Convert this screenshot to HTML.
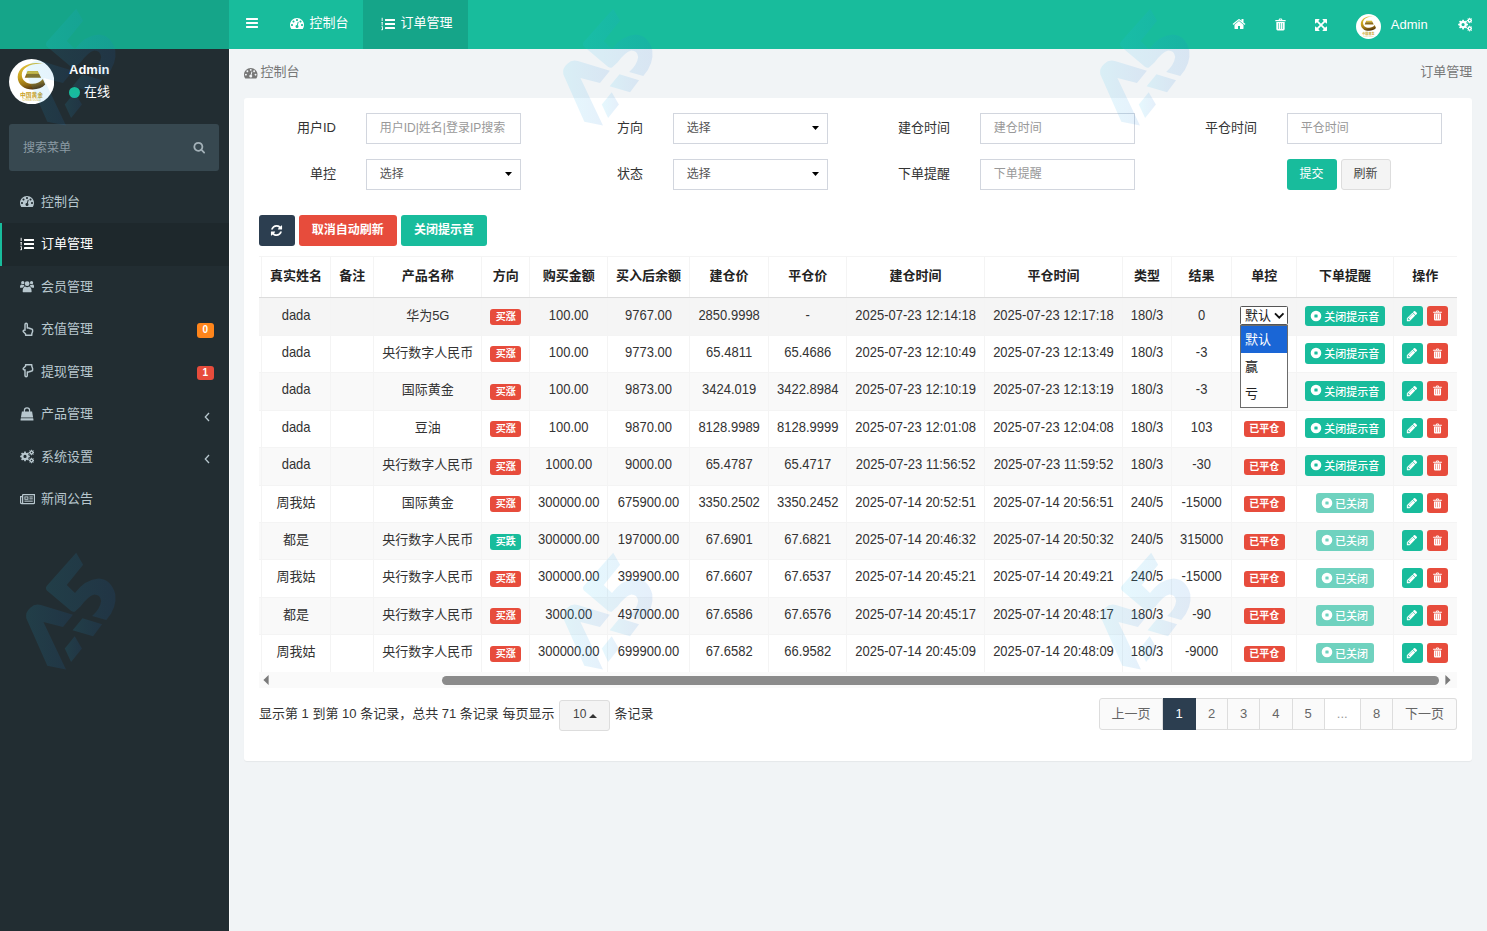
<!DOCTYPE html><html lang="zh-CN"><head><meta charset="utf-8"><title>订单管理</title><style>
*{box-sizing:border-box;margin:0;padding:0}
html,body{width:1487px;height:931px;overflow:hidden}
body{font-family:"Liberation Sans","Noto Sans CJK SC",sans-serif;font-size:13px;color:#333;background:#f1f4f6;position:relative}
.ic{display:block;position:absolute}
.abs{position:absolute}
.t{position:absolute;white-space:nowrap;line-height:20px;height:20px}
/* header */
#logo{left:0;top:0;width:229px;height:49px;background:#15a589}
#nav{left:229px;top:0;width:1258px;height:49px;background:#18bc9c}
#tabact{left:363px;top:0;width:105px;height:49px;background:#15a589}
.nt{color:#fff;font-size:13px}
/* sidebar */
#side{left:0;top:49px;width:229px;height:882px;background:#222d32}
#sideln{left:229px;top:49px;width:1px;height:882px;background:#fbfcfd}
#search{left:9px;top:124px;width:210px;height:47px;background:#374850;border-radius:3px}
.mi{color:#b8c7ce;font-size:13px}
#miact{left:0;top:223px;width:229px;height:43px;background:#1e282c;border-left:2px solid #18bc9c}
.bdg{position:absolute;color:#fff;font-weight:700;font-size:10px;line-height:14.5px;height:14.5px;width:17px;text-align:center;border-radius:3px}
/* content */
#card{left:244px;top:98px;width:1228px;height:663px;background:#fff;border-radius:3px;box-shadow:0 1px 1px rgba(0,0,0,.05)}
.lbl{position:absolute;font-size:13px;color:#333;text-align:right;width:100px;line-height:20px;height:20px;white-space:nowrap}
.inp{position:absolute;width:155px;height:31px;border:1px solid #d2d6de;background:#fff;font-size:12px;line-height:29px;padding-left:13px;color:#999;white-space:nowrap}
.sel{color:#555}

.btn{position:absolute;border-radius:3px;color:#fff;text-align:center;white-space:nowrap}

/* table */
#tw{left:258.75px;top:256.25px;width:1198px;height:431.5px;overflow:hidden}
.row{position:absolute;left:0;width:1198px;height:37.43px}
.c{position:absolute;top:0;height:100%;border-left:1px solid #f4f4f4;text-align:center;white-space:nowrap;font-size:13px;color:#333;line-height:34.8px}
.hd .c{font-weight:700;line-height:37.5px;color:#222}
.hd{height:41.7px;border-top:1px solid #f4f4f4;border-bottom:1.6px solid #dcdcdc;background:#fff;z-index:2}
.lb{display:inline-block;color:#fff;font-weight:700;font-size:10px;line-height:16px;height:16px;border-radius:3px;padding:0 5.5px;vertical-align:middle;position:relative;top:1px}
.n{display:inline-block;line-height:15px;transform:scaleY(1.09);transform-origin:50% 80%}
.red{background:#e74c3c}.grn{background:#18bc9c}
.xb{position:absolute;top:7.2px;height:20.5px;border-radius:3px;color:#fff;font-size:11px;font-weight:500;line-height:22.4px;text-align:left;white-space:nowrap}
.pg{position:absolute;top:698px;height:32px;border:1px solid #ddd;border-left:0;background:#fafafa;color:#666;text-align:center;line-height:29.5px;font-size:13px;white-space:nowrap}
</style></head><body><div id="logo" class="abs"></div><div id="nav" class="abs"></div><div id="tabact" class="abs"></div><svg class="ic" width="14" height="14" viewBox="0 0 1792 1792" style="left:244.5px;top:15.8px;"><path fill="#fff" d="M1664 1344v128q0 26-19 45t-45 19h-1408q-26 0-45-19t-19-45v-128q0-26 19-45t45-19h1408q26 0 45 19t19 45zm0-512v128q0 26-19 45t-45 19h-1408q-26 0-45-19t-19-45v-128q0-26 19-45t45-19h1408q26 0 45 19t19 45zm0-512v128q0 26-19 45t-45 19h-1408q-26 0-45-19t-19-45v-128q0-26 19-45t45-19h1408q26 0 45 19t19 45z"/></svg><svg class="ic" width="14" height="14" viewBox="0 0 1792 1792" style="left:290px;top:15.8px;"><path fill="#fff" d="M384 1152q0-53-37.500-90.500t-90.500-37.500-90.500 37.500-37.500 90.500 37.500 90.500 90.500 37.500 90.500-37.500 37.500-90.500zm192-448q0-53-37.500-90.500t-90.500-37.500-90.500 37.500-37.500 90.500 37.500 90.500 90.500 37.500 90.500-37.500 37.500-90.500zm428 481l101-382q6-26-7.500-48.500t-38.500-29.500-48 6.500-30 39.500l-101 382q-60 5-107 43.500t-63 98.500q-20 77 20 146t117 89 146-20 89-117q16-60-6-117t-72-91zm660-33q0-53-37.500-90.500t-90.500-37.500-90.500 37.500-37.500 90.500 37.500 90.500 90.500 37.500 90.500-37.500 37.500-90.500zm-640-640q0-53-37.500-90.500t-90.500-37.500-90.500 37.500-37.500 90.500 37.500 90.500 90.500 37.500 90.500-37.500 37.500-90.500zm448 192q0-53-37.500-90.500t-90.500-37.500-90.500 37.500-37.500 90.500 37.500 90.500 90.500 37.500 90.500-37.500 37.500-90.500zm320 448q0 261-141 483-19 29-54 29h-1402q-35 0-54-29-141-221-141-483 0-182 71-348t191-286 286-191 348-71 348 71 286 191 191 286 71 348z"/></svg><div class="t nt" style="left:309.5px;top:12.8px;">控制台</div><svg class="ic" width="14" height="14" viewBox="0 0 14 14" style="left:381px;top:16.5px;"><g fill="#fff"><rect x="4" y="1.9" width="10" height="2" rx=".3"/><rect x="4" y="6" width="10" height="2" rx=".3"/><rect x="4" y="10.1" width="10" height="2" rx=".3"/><rect x=".7" y=".8" width=".9" height="3.2"/><rect x=".3" y="5.2" width="1.7" height=".8"/><rect x=".7" y="6" width=".9" height="2.4"/><rect x=".3" y="9.4" width="1.7" height=".8"/><rect x="1.1" y="10.2" width=".9" height="2.9"/><rect x=".2" y="12.4" width="1" height=".8"/></g></svg><div class="t nt" style="left:400.5px;top:12.8px;">订单管理</div><svg class="ic" width="14" height="14" viewBox="0 0 1792 1792" style="left:1231.5px;top:17px;"><path fill="#fff" d="M1472 992v480q0 26-19 45t-45 19h-384v-384h-256v384h-384q-26 0-45-19t-19-45v-480q0-1 .5-3t.5-3l575-474 575 474q1 2 1 6zm223-69l-62 74q-8 9-21 11h-3q-13 0-21-7l-692-577-692 577q-12 8-24 7-13-2-21-11l-62-74q-8-10-7-23.500t11-21.500l719-599q32-26 76-26t76 26l244 204v-195q0-14 9-23t23-9h192q14 0 23 9t9 23v408l219 182q10 8 11 21.500t-7 23.500z"/></svg><svg class="ic" width="13" height="13" viewBox="0 0 14 14" style="left:1274.1px;top:17.8px;"><path fill="#fff" fill-rule="evenodd" d="M4.9 2.1 L5.5 .9 Q5.7 .5 6.1 .5 H7.9 Q8.3 .5 8.5 .9 L9.1 2.1 H12.2 Q12.6 2.1 12.6 2.5 V3.2 Q12.6 3.6 12.2 3.6 H1.8 Q1.4 3.6 1.4 3.2 V2.5 Q1.4 2.1 1.8 2.1 Z M6.1 2.1 H7.9 L7.6 1.5 H6.4 Z M2.5 4.3 H11.5 V11.9 Q11.5 13.5 10.1 13.5 H3.9 Q2.5 13.5 2.5 11.9 Z M4.4 5.6 V11.6 Q4.4 11.9 4.65 11.9 H4.75 Q5 11.9 5 11.6 V5.6 Q5 5.3 4.75 5.3 H4.65 Q4.4 5.3 4.4 5.6 Z M6.7 5.6 V11.6 Q6.7 11.9 6.95 11.9 H7.05 Q7.3 11.9 7.3 11.6 V5.6 Q7.3 5.3 7.05 5.3 H6.95 Q6.7 5.3 6.7 5.6 Z M9 5.6 V11.6 Q9 11.9 9.25 11.9 H9.35 Q9.6 11.9 9.6 11.6 V5.6 Q9.6 5.3 9.35 5.3 H9.25 Q9 5.3 9 5.6 Z"/></svg><svg class="ic" width="14" height="14" viewBox="0 0 1792 1792" style="left:1313.5px;top:17.5px;"><path fill="#fff" d="M1411 541l-355 355 355 355 144-144q29-31 70-14 39 17 39 59v448q0 26-19 45t-45 19h-448q-42 0-59-40-17-39 14-69l144-144-355-355-355 355 144 144q31 30 14 69-17 40-59 40h-448q-26 0-45-19t-19-45v-448q0-42 40-59 39-17 69 14l144 144 355-355-355-355-144 144q-19 19-45 19-12 0-24-5-40-17-40-59v-448q0-26 19-45t45-19h448q42 0 59 40 17 39-14 69l-144 144 355 355 355-355-144-144q-31-30-14-69 17-40 59-40h448q26 0 45 19t19 45v448q0 42-39 59-13 5-25 5-26 0-45-19z"/></svg><svg class="ic" style="left:1355.5px;top:13.75px" width="25" height="25" viewBox="0 0 45 45"><defs><linearGradient id="gld25" x1=".3" y1="0" x2=".55" y2="1"><stop offset="0" stop-color="#e0c23c"/><stop offset=".45" stop-color="#c9a21e"/><stop offset=".75" stop-color="#9a7416"/><stop offset="1" stop-color="#4e300c"/></linearGradient></defs><circle cx="22.5" cy="22.5" r="22.5" fill="#fff"/><path fill="url(#gld25)" fill-rule="evenodd" d="M34.2 4.9 C22 1.5 8.6 7.5 8.6 17.8 C8.6 25.5 15.5 30.3 23.5 30.3 C28.5 30.3 33 28.6 36 25.4 L33.6 19.9 C31.5 23 27.5 24.6 23.5 24.6 C17 24.6 12.7 21 12.7 15.6 C12.7 8.5 22.5 3.5 34.2 4.9 Z"/><path fill="#cfae2c" d="M18.4 12 H28.6 L30 15 H17.2 Z"/><path fill="#8d6c18" d="M17.2 15 H30 L31.9 18.7 H15.6 Z"/><path fill="#d9bf45" d="M19.5 12.6 H27.8 L28.4 13.9 Q23.5 12.9 19 13.9 Z"/><text x="22.4" y="38.1" text-anchor="middle" font-family='"Liberation Sans","Noto Sans CJK SC",sans-serif' font-weight="700" font-size="5.7" fill="#c9a227">中国黄金</text><text x="22.6" y="42" text-anchor="middle" font-family='"Liberation Sans",sans-serif' font-weight="700" font-size="2.9" fill="#e3cf7c">CHINA GOLD</text></svg><div class="t nt" style="left:1390.8px;top:15px;">Admin</div><svg class="ic" width="14.5" height="14.5" viewBox="0 0 14 14" style="left:1457.5px;top:17.2px;"><path fill="#fff" fill-rule="evenodd" d="M8.50 6.43 L9.65 6.58 L9.65 8.02 L8.50 8.17 L8.06 9.23 L8.77 10.14 L7.74 11.17 L6.83 10.46 L5.77 10.90 L5.62 12.05 L4.18 12.05 L4.03 10.90 L2.97 10.46 L2.06 11.17 L1.03 10.14 L1.74 9.23 L1.30 8.17 L0.15 8.02 L0.15 6.58 L1.30 6.43 L1.74 5.37 L1.03 4.46 L2.06 3.43 L2.97 4.14 L4.03 3.70 L4.18 2.55 L5.62 2.55 L5.77 3.70 L6.83 4.14 L7.74 3.43 L8.77 4.46 L8.06 5.37 Z M6.45 7.30 A1.55 1.55 0 1 0 3.35 7.30 A1.55 1.55 0 1 0 6.45 7.30 Z M13.24 2.93 L14.02 2.99 L14.02 3.81 L13.24 3.87 L13.01 4.44 L13.52 5.03 L12.93 5.62 L12.34 5.11 L11.77 5.34 L11.71 6.12 L10.89 6.12 L10.83 5.34 L10.26 5.11 L9.67 5.62 L9.08 5.03 L9.59 4.44 L9.36 3.87 L8.58 3.81 L8.58 2.99 L9.36 2.93 L9.59 2.36 L9.08 1.77 L9.67 1.18 L10.26 1.69 L10.83 1.46 L10.89 0.68 L11.71 0.68 L11.77 1.46 L12.34 1.69 L12.93 1.18 L13.52 1.77 L13.01 2.36 Z M12.05 3.40 A0.75 0.75 0 1 0 10.55 3.40 A0.75 0.75 0 1 0 12.05 3.40 Z M13.24 10.73 L14.02 10.79 L14.02 11.61 L13.24 11.67 L13.01 12.24 L13.52 12.83 L12.93 13.42 L12.34 12.91 L11.77 13.14 L11.71 13.92 L10.89 13.92 L10.83 13.14 L10.26 12.91 L9.67 13.42 L9.08 12.83 L9.59 12.24 L9.36 11.67 L8.58 11.61 L8.58 10.79 L9.36 10.73 L9.59 10.16 L9.08 9.57 L9.67 8.98 L10.26 9.49 L10.83 9.26 L10.89 8.48 L11.71 8.48 L11.77 9.26 L12.34 9.49 L12.93 8.98 L13.52 9.57 L13.01 10.16 Z M12.05 11.20 A0.75 0.75 0 1 0 10.55 11.20 A0.75 0.75 0 1 0 12.05 11.20 Z"/></svg><div id="side" class="abs"></div><div id="sideln" class="abs"></div><svg class="ic" style="left:8.9px;top:58.9px" width="45.3" height="45.3" viewBox="0 0 45 45"><defs><linearGradient id="gld45" x1=".3" y1="0" x2=".55" y2="1"><stop offset="0" stop-color="#e0c23c"/><stop offset=".45" stop-color="#c9a21e"/><stop offset=".75" stop-color="#9a7416"/><stop offset="1" stop-color="#4e300c"/></linearGradient></defs><circle cx="22.5" cy="22.5" r="22.5" fill="#fff"/><path fill="url(#gld45)" fill-rule="evenodd" d="M34.2 4.9 C22 1.5 8.6 7.5 8.6 17.8 C8.6 25.5 15.5 30.3 23.5 30.3 C28.5 30.3 33 28.6 36 25.4 L33.6 19.9 C31.5 23 27.5 24.6 23.5 24.6 C17 24.6 12.7 21 12.7 15.6 C12.7 8.5 22.5 3.5 34.2 4.9 Z"/><path fill="#cfae2c" d="M18.4 12 H28.6 L30 15 H17.2 Z"/><path fill="#8d6c18" d="M17.2 15 H30 L31.9 18.7 H15.6 Z"/><path fill="#d9bf45" d="M19.5 12.6 H27.8 L28.4 13.9 Q23.5 12.9 19 13.9 Z"/><text x="22.4" y="38.1" text-anchor="middle" font-family='"Liberation Sans","Noto Sans CJK SC",sans-serif' font-weight="700" font-size="5.7" fill="#c9a227">中国黄金</text><text x="22.6" y="42" text-anchor="middle" font-family='"Liberation Sans",sans-serif' font-weight="700" font-size="2.9" fill="#e3cf7c">CHINA GOLD</text></svg><div class="t " style="left:69px;top:60px;color:#fff;font-weight:700;font-size:13px">Admin</div><div class="abs" style="left:69px;top:86.5px;width:11px;height:11px;border-radius:50%;background:#18bc9c"></div><div class="t " style="left:84px;top:82px;color:#fff;font-size:13px">在线</div><div id="search" class="abs"></div><div class="t " style="left:23px;top:138.2px;color:#8a9aa3;font-size:12px">搜索菜单</div><svg class="ic" width="12.5" height="12.5" viewBox="0 0 1792 1792" style="left:193.3px;top:141.3px;"><path fill="#a3b1b8" d="M1216 832q0-185-131.500-316.500t-316.500-131.500-316.500 131.500-131.500 316.500 131.500 316.500 316.500 131.500 316.500-131.500 131.500-316.500zm512 832q0 52-38 90t-90 38q-54 0-90-38l-343-342q-179 124-399 124-143 0-273.500-55.500t-225-150-150-225-55.500-273.500 55.500-273.500 150-225 225-150 273.500-55.500 273.500 55.500 225 150 150 225 55.500 273.500q0 220-124 399l343 343q37 37 37 90z"/></svg><div id="miact" class="abs"></div><svg class="ic" width="14" height="14" viewBox="0 0 1792 1792" style="left:20px;top:194.3px;"><path fill="#b8c7ce" d="M384 1152q0-53-37.500-90.500t-90.500-37.500-90.500 37.500-37.500 90.500 37.500 90.500 90.500 37.500 90.500-37.500 37.500-90.500zm192-448q0-53-37.500-90.500t-90.500-37.500-90.500 37.500-37.500 90.500 37.500 90.500 90.500 37.500 90.500-37.500 37.500-90.500zm428 481l101-382q6-26-7.500-48.500t-38.500-29.500-48 6.500-30 39.500l-101 382q-60 5-107 43.500t-63 98.500q-20 77 20 146t117 89 146-20 89-117q16-60-6-117t-72-91zm660-33q0-53-37.500-90.500t-90.500-37.500-90.500 37.500-37.500 90.500 37.500 90.500 90.500 37.500 90.500-37.500 37.500-90.500zm-640-640q0-53-37.500-90.500t-90.500-37.500-90.500 37.500-37.500 90.500 37.500 90.500 90.500 37.500 90.500-37.500 37.500-90.500zm448 192q0-53-37.500-90.500t-90.500-37.500-90.500 37.500-37.500 90.500 37.500 90.500 90.500 37.500 90.500-37.500 37.500-90.500zm320 448q0 261-141 483-19 29-54 29h-1402q-35 0-54-29-141-221-141-483 0-182 71-348t191-286 286-191 348-71 348 71 286 191 191 286 71 348z"/></svg><div class="t mi" style="left:41px;top:191.5px;color:#b8c7ce">控制台</div><svg class="ic" width="14" height="14" viewBox="0 0 14 14" style="left:20px;top:236.8px;"><g fill="#fff"><rect x="4" y="1.9" width="10" height="2" rx=".3"/><rect x="4" y="6" width="10" height="2" rx=".3"/><rect x="4" y="10.1" width="10" height="2" rx=".3"/><rect x=".7" y=".8" width=".9" height="3.2"/><rect x=".3" y="5.2" width="1.7" height=".8"/><rect x=".7" y="6" width=".9" height="2.4"/><rect x=".3" y="9.4" width="1.7" height=".8"/><rect x="1.1" y="10.2" width=".9" height="2.9"/><rect x=".2" y="12.4" width="1" height=".8"/></g></svg><div class="t mi" style="left:41px;top:234.0px;color:#fff">订单管理</div><svg class="ic" width="14.3" height="14.3" viewBox="0 0 14 14" style="left:20px;top:279.3px;"><g fill="#b8c7ce"><circle cx="7" cy="4.6" r="2.35"/><path d="M3.1 12.9 Q2.6 12.9 2.6 12.2 C2.6 9.2 3.9 7.4 5.1 7.4 Q6 8 7 8 Q8 8 8.9 7.4 C10.1 7.4 11.4 9.2 11.4 12.2 Q11.4 12.9 10.9 12.9 Z"/><circle cx="2.7" cy="3.6" r="1.6"/><circle cx="11.3" cy="3.6" r="1.6"/><path d="M0 8.1 C0 6.5 .7 5.5 1.5 5.5 Q2.1 5.9 2.7 5.9 Q3.4 5.9 4 5.6 Q4 6.6 4.4 7.2 C3.5 7.3 2.9 7.8 2.5 8.6 H.7 Q0 8.6 0 8.1 Z"/><path d="M14 8.1 C14 6.5 13.3 5.5 12.5 5.5 Q11.9 5.9 11.3 5.9 Q10.6 5.9 10 5.6 Q10 6.6 9.6 7.2 C10.5 7.3 11.1 7.8 11.5 8.6 H13.3 Q14 8.6 14 8.1 Z"/></g></svg><div class="t mi" style="left:41px;top:276.5px;color:#b8c7ce">会员管理</div><svg class="ic" width="14" height="14" viewBox="0 0 14 14" style="left:20px;top:321.8px;"><path fill="none" stroke="#b8c7ce" stroke-width="1.45" stroke-linejoin="round" d="M5 8.3 V2.4 a1.15 1.15 0 0 1 2.3 0 V6 h1 a1.05 1.05 0 0 1 1.2 .55 a1.05 1.05 0 0 1 1.5 .55 a1.1 1.1 0 0 1 1.6 1 V9.6 l-.8 2.2 v1.4 H5.6 v-1.2 L3.2 9.5 a1.15 1.15 0 0 1 1.8 -1.2 Z"/></svg><div class="t mi" style="left:41px;top:319.0px;color:#b8c7ce">充值管理</div><svg class="ic" width="14" height="14" viewBox="0 0 14 14" style="left:20px;top:364.3px;"><g transform="translate(0,14) scale(1,-1)"><path fill="none" stroke="#b8c7ce" stroke-width="1.45" stroke-linejoin="round" d="M5 8.3 V2.4 a1.15 1.15 0 0 1 2.3 0 V6 h1 a1.05 1.05 0 0 1 1.2 .55 a1.05 1.05 0 0 1 1.5 .55 a1.1 1.1 0 0 1 1.6 1 V9.6 l-.8 2.2 v1.4 H5.6 v-1.2 L3.2 9.5 a1.15 1.15 0 0 1 1.8 -1.2 Z"/></g></svg><div class="t mi" style="left:41px;top:361.5px;color:#b8c7ce">提现管理</div><svg class="ic" width="14" height="14" viewBox="0 0 14 14" style="left:20px;top:406.8px;"><path fill="#b8c7ce" d="M1.9 4.6 H12.1 L13.1 10.6 H.9 Z M.8 11.2 H13.2 L13.5 13.1 Q13.5 13.6 13 13.6 H1 Q.5 13.6 .5 13.1 Z"/><path fill="none" stroke="#b8c7ce" stroke-width="1.25" d="M4.4 6.2 V3.5 a2.6 2.6 0 0 1 5.2 0 V6.2"/></svg><div class="t mi" style="left:41px;top:404.0px;color:#b8c7ce">产品管理</div><svg class="ic" width="14.3" height="14.3" viewBox="0 0 14 14" style="left:20px;top:449.3px;"><path fill="#b8c7ce" fill-rule="evenodd" d="M8.50 6.43 L9.65 6.58 L9.65 8.02 L8.50 8.17 L8.06 9.23 L8.77 10.14 L7.74 11.17 L6.83 10.46 L5.77 10.90 L5.62 12.05 L4.18 12.05 L4.03 10.90 L2.97 10.46 L2.06 11.17 L1.03 10.14 L1.74 9.23 L1.30 8.17 L0.15 8.02 L0.15 6.58 L1.30 6.43 L1.74 5.37 L1.03 4.46 L2.06 3.43 L2.97 4.14 L4.03 3.70 L4.18 2.55 L5.62 2.55 L5.77 3.70 L6.83 4.14 L7.74 3.43 L8.77 4.46 L8.06 5.37 Z M6.45 7.30 A1.55 1.55 0 1 0 3.35 7.30 A1.55 1.55 0 1 0 6.45 7.30 Z M13.24 2.93 L14.02 2.99 L14.02 3.81 L13.24 3.87 L13.01 4.44 L13.52 5.03 L12.93 5.62 L12.34 5.11 L11.77 5.34 L11.71 6.12 L10.89 6.12 L10.83 5.34 L10.26 5.11 L9.67 5.62 L9.08 5.03 L9.59 4.44 L9.36 3.87 L8.58 3.81 L8.58 2.99 L9.36 2.93 L9.59 2.36 L9.08 1.77 L9.67 1.18 L10.26 1.69 L10.83 1.46 L10.89 0.68 L11.71 0.68 L11.77 1.46 L12.34 1.69 L12.93 1.18 L13.52 1.77 L13.01 2.36 Z M12.05 3.40 A0.75 0.75 0 1 0 10.55 3.40 A0.75 0.75 0 1 0 12.05 3.40 Z M13.24 10.73 L14.02 10.79 L14.02 11.61 L13.24 11.67 L13.01 12.24 L13.52 12.83 L12.93 13.42 L12.34 12.91 L11.77 13.14 L11.71 13.92 L10.89 13.92 L10.83 13.14 L10.26 12.91 L9.67 13.42 L9.08 12.83 L9.59 12.24 L9.36 11.67 L8.58 11.61 L8.58 10.79 L9.36 10.73 L9.59 10.16 L9.08 9.57 L9.67 8.98 L10.26 9.49 L10.83 9.26 L10.89 8.48 L11.71 8.48 L11.77 9.26 L12.34 9.49 L12.93 8.98 L13.52 9.57 L13.01 10.16 Z M12.05 11.20 A0.75 0.75 0 1 0 10.55 11.20 A0.75 0.75 0 1 0 12.05 11.20 Z"/></svg><div class="t mi" style="left:41px;top:446.5px;color:#b8c7ce">系统设置</div><svg class="ic" width="15.0" height="14" viewBox="0 0 15 14" style="left:20px;top:491.8px;"><g fill="none" stroke="#b8c7ce" stroke-width="1.3"><path d="M2.6 2.6 H14.5 V10.6 Q14.5 11.6 13.5 11.6 H2 Q.5 11.6 .5 10.3 V4.6 H2.6"/><path d="M2.6 2.6 V10.4 Q2.6 11.4 1.7 11.5"/></g><g fill="#b8c7ce"><rect x="4.4" y="4.4" width="4" height="3.4"/><rect x="9.4" y="4.4" width="3.4" height="1.1"/><rect x="9.4" y="6.3" width="3.4" height="1.1"/><rect x="4.4" y="8.6" width="8.4" height="1.1"/></g><rect x="5.4" y="5.4" width="2" height="1.4" fill="#222d32"/></svg><div class="t mi" style="left:41px;top:489.0px;color:#b8c7ce">新闻公告</div><div class="bdg" style="left:196.8px;top:323px;background:#ff851b">0</div><div class="bdg" style="left:196.8px;top:365.8px;background:#e74c3c">1</div><svg class="ic" style="left:203.5px;top:411.6px" width="6" height="10" viewBox="0 0 6 10"><path d="M5 1 L1.3 5 L5 9" fill="none" stroke="#b8c7ce" stroke-width="1.3"/></svg><svg class="ic" style="left:203.5px;top:454px" width="6" height="10" viewBox="0 0 6 10"><path d="M5 1 L1.3 5 L5 9" fill="none" stroke="#b8c7ce" stroke-width="1.3"/></svg><svg class="ic" width="13.5" height="13.5" viewBox="0 0 1792 1792" style="left:244px;top:65.5px;"><path fill="#777" d="M384 1152q0-53-37.500-90.500t-90.500-37.500-90.500 37.500-37.500 90.500 37.500 90.500 90.500 37.500 90.500-37.500 37.500-90.500zm192-448q0-53-37.500-90.500t-90.500-37.500-90.500 37.500-37.500 90.500 37.500 90.500 90.500 37.500 90.500-37.500 37.500-90.500zm428 481l101-382q6-26-7.500-48.500t-38.500-29.500-48 6.500-30 39.500l-101 382q-60 5-107 43.500t-63 98.500q-20 77 20 146t117 89 146-20 89-117q16-60-6-117t-72-91zm660-33q0-53-37.500-90.500t-90.500-37.500-90.500 37.500-37.500 90.500 37.500 90.500 90.500 37.500 90.500-37.500 37.500-90.500zm-640-640q0-53-37.500-90.500t-90.500-37.500-90.500 37.500-37.500 90.500 37.500 90.500 90.500 37.500 90.500-37.500 37.500-90.500zm448 192q0-53-37.500-90.500t-90.500-37.500-90.500 37.500-37.500 90.500 37.500 90.500 90.500 37.500 90.500-37.500 37.500-90.500zm320 448q0 261-141 483-19 29-54 29h-1402q-35 0-54-29-141-221-141-483 0-182 71-348t191-286 286-191 348-71 348 71 286 191 191 286 71 348z"/></svg><div class="t " style="left:260.5px;top:62.3px;color:#777;font-size:13px">控制台</div><div class="t " style="left:1420.3px;top:62.3px;color:#777;font-size:13px">订单管理</div><div id="card" class="abs"></div><div class="lbl" style="left:236px;top:118px">用户ID</div><div class="lbl" style="left:543px;top:118px">方向</div><div class="lbl" style="left:850px;top:118px">建仓时间</div><div class="lbl" style="left:1157px;top:118px">平仓时间</div><div class="lbl" style="left:236px;top:164px">单控</div><div class="lbl" style="left:543px;top:164px">状态</div><div class="lbl" style="left:850px;top:164px">下单提醒</div><div class="inp" style="left:365.75px;top:113px">用户ID|姓名|登录IP搜索</div><div class="inp sel" style="left:672.75px;top:113px">选择<svg class="ic" style="right:8px;top:12.4px" width="7" height="4" viewBox="0 0 7 4"><path d="M0 0 H7 L3.5 4 Z" fill="#000"/></svg></div><div class="inp" style="left:979.75px;top:113px">建仓时间</div><div class="inp" style="left:1286.75px;top:113px">平仓时间</div><div class="inp sel" style="left:365.75px;top:158.75px">选择<svg class="ic" style="right:8px;top:12.4px" width="7" height="4" viewBox="0 0 7 4"><path d="M0 0 H7 L3.5 4 Z" fill="#000"/></svg></div><div class="inp sel" style="left:672.75px;top:158.75px">选择<svg class="ic" style="right:8px;top:12.4px" width="7" height="4" viewBox="0 0 7 4"><path d="M0 0 H7 L3.5 4 Z" fill="#000"/></svg></div><div class="inp" style="left:979.75px;top:158.75px">下单提醒</div><div class="btn" style="left:1286.75px;top:158.75px;width:49.75px;height:30.75px;background:#18bc9c;line-height:30px;font-size:12px">提交</div><div class="btn" style="left:1340.75px;top:158.75px;width:49.75px;height:30.75px;background:#f4f4f4;border:1px solid #ddd;color:#444;line-height:28px;font-size:12px">刷新</div><div class="btn" style="left:258.75px;top:214.5px;width:36.3px;height:31px;background:#2c3e50"></div><svg class="ic" width="13" height="13" viewBox="0 0 1792 1792" style="left:270.4px;top:223.6px;"><path fill="#fff" d="M1639 1056q0 5-1 7-64 268-268 434.500t-478 166.500q-146 0-282.500-55t-243.500-157l-129 129q-19 19-45 19t-45-19-19-45v-448q0-26 19-45t45-19h448q26 0 45 19t19 45-19 45l-137 137q71 66 161 102t187 36q134 0 250-65t186-179q11-17 53-117 8-23 30-23h192q13 0 22.500 9.500t9.500 22.500zm25-800v448q0 26-19 45t-45 19h-448q-26 0-45-19t-19-45 19-45l138-138q-148-137-349-137-134 0-250 65t-186 179q-11 17-53 117-8 23-30 23h-199q-13 0-22.500-9.500t-9.500-22.500v-7q65-268 270-434.500t480-166.500q146 0 284 55.500t245 156.500l130-129q19-19 45-19t45 19 19 45z"/></svg><div class="btn" style="left:298.75px;top:214.5px;width:98px;height:31px;background:#e74c3c;line-height:30px;font-size:12px;font-weight:700">取消自动刷新</div><div class="btn" style="left:401.25px;top:214.5px;width:85.5px;height:31px;background:#18bc9c;line-height:30px;font-size:12px;font-weight:700">关闭提示音</div><div id="tw" class="abs"><div class="row hd" style="top:0"><div class="c" style="left:0.25px;width:2.25px;border-left:0"></div><div class="c" style="left:2.50px;width:68.75px;">真实姓名</div><div class="c" style="left:71.25px;width:43.40px;">备注</div><div class="c" style="left:114.65px;width:107.85px;">产品名称</div><div class="c" style="left:222.50px;width:48.15px;">方向</div><div class="c" style="left:270.65px;width:77.60px;">购买金额</div><div class="c" style="left:348.25px;width:82.00px;">买入后余额</div><div class="c" style="left:430.25px;width:79.25px;">建仓价</div><div class="c" style="left:509.50px;width:78.00px;">平仓价</div><div class="c" style="left:587.50px;width:137.75px;">建仓时间</div><div class="c" style="left:725.25px;width:138.00px;">平仓时间</div><div class="c" style="left:863.25px;width:49.00px;">类型</div><div class="c" style="left:912.25px;width:60.25px;">结果</div><div class="c" style="left:972.50px;width:65.00px;">单控</div><div class="c" style="left:1037.50px;width:96.75px;">下单提醒</div><div class="c" style="left:1134.25px;width:63.50px;">操作</div></div><div class="row" style="top:41.25px;background:#f5f5f5;border-top:1px solid #f4f4f4"><div class="c" style="left:0.25px;width:2.25px;border-left:0"></div><div class="c" style="left:2.50px;width:68.75px;"><span class="n">dada</span></div><div class="c" style="left:71.25px;width:43.40px;"></div><div class="c" style="left:114.65px;width:107.85px;">华为5G</div><div class="c" style="left:222.50px;width:48.15px;"><span class="lb red">买涨</span></div><div class="c" style="left:270.65px;width:77.60px;"><span class="n">100.00</span></div><div class="c" style="left:348.25px;width:82.00px;"><span class="n">9767.00</span></div><div class="c" style="left:430.25px;width:79.25px;"><span class="n">2850.9998</span></div><div class="c" style="left:509.50px;width:78.00px;"><span class="n">-</span></div><div class="c" style="left:587.50px;width:137.75px;"><span class="n">2025-07-23 12:14:18</span></div><div class="c" style="left:725.25px;width:138.00px;"><span class="n">2025-07-23 12:17:18</span></div><div class="c" style="left:863.25px;width:49.00px;"><span class="n">180/3</span></div><div class="c" style="left:912.25px;width:60.25px;"><span class="n">0</span></div><div class="c" style="left:972.50px;width:65.00px;"><div class="abs" style="left:7.75px;top:7.5px;width:47.5px;height:18.5px;border:1px solid #555;border-radius:1.5px;background:#fff;line-height:18px;font-size:13px;text-align:left;padding-left:4px;color:#222">默认<svg class="ic" style="left:33.2px;top:4.6px" width="10.5" height="7.5" viewBox="0 0 10.5 7.5"><path d="M1 1.3 L5.25 5.6 L9.5 1.3" fill="none" stroke="#111" stroke-width="1.9"/></svg></div></div><div class="c" style="left:1037.50px;width:96.75px;"><div class="xb grn" style="left:7.5px;width:79.75px;padding-left:19.5px">关闭提示音<svg class="ic" width="14" height="14" viewBox="0 0 14 14" style="left:4.4px;top:2.9px;"><path fill="#fff" fill-rule="evenodd" d="M7 1.7 A5.3 5.3 0 1 0 7 12.3 A5.3 5.3 0 1 0 7 1.7 Z M5.9 5.4 H8.1 Q8.6 5.4 8.6 5.9 V8.1 Q8.6 8.6 8.1 8.6 H5.9 Q5.4 8.6 5.4 8.1 V5.9 Q5.4 5.4 5.9 5.4 Z"/></svg></div></div><div class="c" style="left:1134.25px;width:63.50px;"><div class="xb grn" style="left:7.5px;width:21px"><svg class="ic" width="12" height="12" viewBox="0 0 1792 1792" style="left:4.6px;top:4px;"><path fill="#fff" d="M491 1536l91-91-235-235-91 91v107h128v128h107zm523-928q0-22-22-22-10 0-17 7l-542 542q-7 7-7 17 0 22 22 22 10 0 17-7l542-542q7-7 7-17zm-54-192l416 416-832 832h-416v-416zm683 96q0 53-37 90l-166 166-416-416 166-165q36-38 90-38 53 0 91 38l235 234q37 39 37 91z"/></svg></div><div class="xb red" style="left:32.5px;width:21px"><svg class="ic" width="11" height="11" viewBox="0 0 14 14" style="left:5px;top:4.7px;"><path fill="#fff" fill-rule="evenodd" d="M4.9 2.1 L5.5 .9 Q5.7 .5 6.1 .5 H7.9 Q8.3 .5 8.5 .9 L9.1 2.1 H12.2 Q12.6 2.1 12.6 2.5 V3.2 Q12.6 3.6 12.2 3.6 H1.8 Q1.4 3.6 1.4 3.2 V2.5 Q1.4 2.1 1.8 2.1 Z M6.1 2.1 H7.9 L7.6 1.5 H6.4 Z M2.5 4.3 H11.5 V11.9 Q11.5 13.5 10.1 13.5 H3.9 Q2.5 13.5 2.5 11.9 Z M4.4 5.6 V11.6 Q4.4 11.9 4.65 11.9 H4.75 Q5 11.9 5 11.6 V5.6 Q5 5.3 4.75 5.3 H4.65 Q4.4 5.3 4.4 5.6 Z M6.7 5.6 V11.6 Q6.7 11.9 6.95 11.9 H7.05 Q7.3 11.9 7.3 11.6 V5.6 Q7.3 5.3 7.05 5.3 H6.95 Q6.7 5.3 6.7 5.6 Z M9 5.6 V11.6 Q9 11.9 9.25 11.9 H9.35 Q9.6 11.9 9.6 11.6 V5.6 Q9.6 5.3 9.35 5.3 H9.25 Q9 5.3 9 5.6 Z"/></svg></div></div></div><div class="row" style="top:78.67px;background:#fff;border-top:1px solid #f4f4f4"><div class="c" style="left:0.25px;width:2.25px;border-left:0"></div><div class="c" style="left:2.50px;width:68.75px;"><span class="n">dada</span></div><div class="c" style="left:71.25px;width:43.40px;"></div><div class="c" style="left:114.65px;width:107.85px;">央行数字人民币</div><div class="c" style="left:222.50px;width:48.15px;"><span class="lb red">买涨</span></div><div class="c" style="left:270.65px;width:77.60px;"><span class="n">100.00</span></div><div class="c" style="left:348.25px;width:82.00px;"><span class="n">9773.00</span></div><div class="c" style="left:430.25px;width:79.25px;"><span class="n">65.4811</span></div><div class="c" style="left:509.50px;width:78.00px;"><span class="n">65.4686</span></div><div class="c" style="left:587.50px;width:137.75px;"><span class="n">2025-07-23 12:10:49</span></div><div class="c" style="left:725.25px;width:138.00px;"><span class="n">2025-07-23 12:13:49</span></div><div class="c" style="left:863.25px;width:49.00px;"><span class="n">180/3</span></div><div class="c" style="left:912.25px;width:60.25px;"><span class="n">-3</span></div><div class="c" style="left:972.50px;width:65.00px;"></div><div class="c" style="left:1037.50px;width:96.75px;"><div class="xb grn" style="left:7.5px;width:79.75px;padding-left:19.5px">关闭提示音<svg class="ic" width="14" height="14" viewBox="0 0 14 14" style="left:4.4px;top:2.9px;"><path fill="#fff" fill-rule="evenodd" d="M7 1.7 A5.3 5.3 0 1 0 7 12.3 A5.3 5.3 0 1 0 7 1.7 Z M5.9 5.4 H8.1 Q8.6 5.4 8.6 5.9 V8.1 Q8.6 8.6 8.1 8.6 H5.9 Q5.4 8.6 5.4 8.1 V5.9 Q5.4 5.4 5.9 5.4 Z"/></svg></div></div><div class="c" style="left:1134.25px;width:63.50px;"><div class="xb grn" style="left:7.5px;width:21px"><svg class="ic" width="12" height="12" viewBox="0 0 1792 1792" style="left:4.6px;top:4px;"><path fill="#fff" d="M491 1536l91-91-235-235-91 91v107h128v128h107zm523-928q0-22-22-22-10 0-17 7l-542 542q-7 7-7 17 0 22 22 22 10 0 17-7l542-542q7-7 7-17zm-54-192l416 416-832 832h-416v-416zm683 96q0 53-37 90l-166 166-416-416 166-165q36-38 90-38 53 0 91 38l235 234q37 39 37 91z"/></svg></div><div class="xb red" style="left:32.5px;width:21px"><svg class="ic" width="11" height="11" viewBox="0 0 14 14" style="left:5px;top:4.7px;"><path fill="#fff" fill-rule="evenodd" d="M4.9 2.1 L5.5 .9 Q5.7 .5 6.1 .5 H7.9 Q8.3 .5 8.5 .9 L9.1 2.1 H12.2 Q12.6 2.1 12.6 2.5 V3.2 Q12.6 3.6 12.2 3.6 H1.8 Q1.4 3.6 1.4 3.2 V2.5 Q1.4 2.1 1.8 2.1 Z M6.1 2.1 H7.9 L7.6 1.5 H6.4 Z M2.5 4.3 H11.5 V11.9 Q11.5 13.5 10.1 13.5 H3.9 Q2.5 13.5 2.5 11.9 Z M4.4 5.6 V11.6 Q4.4 11.9 4.65 11.9 H4.75 Q5 11.9 5 11.6 V5.6 Q5 5.3 4.75 5.3 H4.65 Q4.4 5.3 4.4 5.6 Z M6.7 5.6 V11.6 Q6.7 11.9 6.95 11.9 H7.05 Q7.3 11.9 7.3 11.6 V5.6 Q7.3 5.3 7.05 5.3 H6.95 Q6.7 5.3 6.7 5.6 Z M9 5.6 V11.6 Q9 11.9 9.25 11.9 H9.35 Q9.6 11.9 9.6 11.6 V5.6 Q9.6 5.3 9.35 5.3 H9.25 Q9 5.3 9 5.6 Z"/></svg></div></div></div><div class="row" style="top:116.10px;background:#f9f9f9;border-top:1px solid #f4f4f4"><div class="c" style="left:0.25px;width:2.25px;border-left:0"></div><div class="c" style="left:2.50px;width:68.75px;"><span class="n">dada</span></div><div class="c" style="left:71.25px;width:43.40px;"></div><div class="c" style="left:114.65px;width:107.85px;">国际黄金</div><div class="c" style="left:222.50px;width:48.15px;"><span class="lb red">买涨</span></div><div class="c" style="left:270.65px;width:77.60px;"><span class="n">100.00</span></div><div class="c" style="left:348.25px;width:82.00px;"><span class="n">9873.00</span></div><div class="c" style="left:430.25px;width:79.25px;"><span class="n">3424.019</span></div><div class="c" style="left:509.50px;width:78.00px;"><span class="n">3422.8984</span></div><div class="c" style="left:587.50px;width:137.75px;"><span class="n">2025-07-23 12:10:19</span></div><div class="c" style="left:725.25px;width:138.00px;"><span class="n">2025-07-23 12:13:19</span></div><div class="c" style="left:863.25px;width:49.00px;"><span class="n">180/3</span></div><div class="c" style="left:912.25px;width:60.25px;"><span class="n">-3</span></div><div class="c" style="left:972.50px;width:65.00px;"></div><div class="c" style="left:1037.50px;width:96.75px;"><div class="xb grn" style="left:7.5px;width:79.75px;padding-left:19.5px">关闭提示音<svg class="ic" width="14" height="14" viewBox="0 0 14 14" style="left:4.4px;top:2.9px;"><path fill="#fff" fill-rule="evenodd" d="M7 1.7 A5.3 5.3 0 1 0 7 12.3 A5.3 5.3 0 1 0 7 1.7 Z M5.9 5.4 H8.1 Q8.6 5.4 8.6 5.9 V8.1 Q8.6 8.6 8.1 8.6 H5.9 Q5.4 8.6 5.4 8.1 V5.9 Q5.4 5.4 5.9 5.4 Z"/></svg></div></div><div class="c" style="left:1134.25px;width:63.50px;"><div class="xb grn" style="left:7.5px;width:21px"><svg class="ic" width="12" height="12" viewBox="0 0 1792 1792" style="left:4.6px;top:4px;"><path fill="#fff" d="M491 1536l91-91-235-235-91 91v107h128v128h107zm523-928q0-22-22-22-10 0-17 7l-542 542q-7 7-7 17 0 22 22 22 10 0 17-7l542-542q7-7 7-17zm-54-192l416 416-832 832h-416v-416zm683 96q0 53-37 90l-166 166-416-416 166-165q36-38 90-38 53 0 91 38l235 234q37 39 37 91z"/></svg></div><div class="xb red" style="left:32.5px;width:21px"><svg class="ic" width="11" height="11" viewBox="0 0 14 14" style="left:5px;top:4.7px;"><path fill="#fff" fill-rule="evenodd" d="M4.9 2.1 L5.5 .9 Q5.7 .5 6.1 .5 H7.9 Q8.3 .5 8.5 .9 L9.1 2.1 H12.2 Q12.6 2.1 12.6 2.5 V3.2 Q12.6 3.6 12.2 3.6 H1.8 Q1.4 3.6 1.4 3.2 V2.5 Q1.4 2.1 1.8 2.1 Z M6.1 2.1 H7.9 L7.6 1.5 H6.4 Z M2.5 4.3 H11.5 V11.9 Q11.5 13.5 10.1 13.5 H3.9 Q2.5 13.5 2.5 11.9 Z M4.4 5.6 V11.6 Q4.4 11.9 4.65 11.9 H4.75 Q5 11.9 5 11.6 V5.6 Q5 5.3 4.75 5.3 H4.65 Q4.4 5.3 4.4 5.6 Z M6.7 5.6 V11.6 Q6.7 11.9 6.95 11.9 H7.05 Q7.3 11.9 7.3 11.6 V5.6 Q7.3 5.3 7.05 5.3 H6.95 Q6.7 5.3 6.7 5.6 Z M9 5.6 V11.6 Q9 11.9 9.25 11.9 H9.35 Q9.6 11.9 9.6 11.6 V5.6 Q9.6 5.3 9.35 5.3 H9.25 Q9 5.3 9 5.6 Z"/></svg></div></div></div><div class="row" style="top:153.52px;background:#fff;border-top:1px solid #f4f4f4"><div class="c" style="left:0.25px;width:2.25px;border-left:0"></div><div class="c" style="left:2.50px;width:68.75px;"><span class="n">dada</span></div><div class="c" style="left:71.25px;width:43.40px;"></div><div class="c" style="left:114.65px;width:107.85px;">豆油</div><div class="c" style="left:222.50px;width:48.15px;"><span class="lb red">买涨</span></div><div class="c" style="left:270.65px;width:77.60px;"><span class="n">100.00</span></div><div class="c" style="left:348.25px;width:82.00px;"><span class="n">9870.00</span></div><div class="c" style="left:430.25px;width:79.25px;"><span class="n">8128.9989</span></div><div class="c" style="left:509.50px;width:78.00px;"><span class="n">8128.9999</span></div><div class="c" style="left:587.50px;width:137.75px;"><span class="n">2025-07-23 12:01:08</span></div><div class="c" style="left:725.25px;width:138.00px;"><span class="n">2025-07-23 12:04:08</span></div><div class="c" style="left:863.25px;width:49.00px;"><span class="n">180/3</span></div><div class="c" style="left:912.25px;width:60.25px;"><span class="n">103</span></div><div class="c" style="left:972.50px;width:65.00px;"><span class="lb red" style="padding:0 5.7px">已平仓</span></div><div class="c" style="left:1037.50px;width:96.75px;"><div class="xb grn" style="left:7.5px;width:79.75px;padding-left:19.5px">关闭提示音<svg class="ic" width="14" height="14" viewBox="0 0 14 14" style="left:4.4px;top:2.9px;"><path fill="#fff" fill-rule="evenodd" d="M7 1.7 A5.3 5.3 0 1 0 7 12.3 A5.3 5.3 0 1 0 7 1.7 Z M5.9 5.4 H8.1 Q8.6 5.4 8.6 5.9 V8.1 Q8.6 8.6 8.1 8.6 H5.9 Q5.4 8.6 5.4 8.1 V5.9 Q5.4 5.4 5.9 5.4 Z"/></svg></div></div><div class="c" style="left:1134.25px;width:63.50px;"><div class="xb grn" style="left:7.5px;width:21px"><svg class="ic" width="12" height="12" viewBox="0 0 1792 1792" style="left:4.6px;top:4px;"><path fill="#fff" d="M491 1536l91-91-235-235-91 91v107h128v128h107zm523-928q0-22-22-22-10 0-17 7l-542 542q-7 7-7 17 0 22 22 22 10 0 17-7l542-542q7-7 7-17zm-54-192l416 416-832 832h-416v-416zm683 96q0 53-37 90l-166 166-416-416 166-165q36-38 90-38 53 0 91 38l235 234q37 39 37 91z"/></svg></div><div class="xb red" style="left:32.5px;width:21px"><svg class="ic" width="11" height="11" viewBox="0 0 14 14" style="left:5px;top:4.7px;"><path fill="#fff" fill-rule="evenodd" d="M4.9 2.1 L5.5 .9 Q5.7 .5 6.1 .5 H7.9 Q8.3 .5 8.5 .9 L9.1 2.1 H12.2 Q12.6 2.1 12.6 2.5 V3.2 Q12.6 3.6 12.2 3.6 H1.8 Q1.4 3.6 1.4 3.2 V2.5 Q1.4 2.1 1.8 2.1 Z M6.1 2.1 H7.9 L7.6 1.5 H6.4 Z M2.5 4.3 H11.5 V11.9 Q11.5 13.5 10.1 13.5 H3.9 Q2.5 13.5 2.5 11.9 Z M4.4 5.6 V11.6 Q4.4 11.9 4.65 11.9 H4.75 Q5 11.9 5 11.6 V5.6 Q5 5.3 4.75 5.3 H4.65 Q4.4 5.3 4.4 5.6 Z M6.7 5.6 V11.6 Q6.7 11.9 6.95 11.9 H7.05 Q7.3 11.9 7.3 11.6 V5.6 Q7.3 5.3 7.05 5.3 H6.95 Q6.7 5.3 6.7 5.6 Z M9 5.6 V11.6 Q9 11.9 9.25 11.9 H9.35 Q9.6 11.9 9.6 11.6 V5.6 Q9.6 5.3 9.35 5.3 H9.25 Q9 5.3 9 5.6 Z"/></svg></div></div></div><div class="row" style="top:190.95px;background:#f9f9f9;border-top:1px solid #f4f4f4"><div class="c" style="left:0.25px;width:2.25px;border-left:0"></div><div class="c" style="left:2.50px;width:68.75px;"><span class="n">dada</span></div><div class="c" style="left:71.25px;width:43.40px;"></div><div class="c" style="left:114.65px;width:107.85px;">央行数字人民币</div><div class="c" style="left:222.50px;width:48.15px;"><span class="lb red">买涨</span></div><div class="c" style="left:270.65px;width:77.60px;"><span class="n">1000.00</span></div><div class="c" style="left:348.25px;width:82.00px;"><span class="n">9000.00</span></div><div class="c" style="left:430.25px;width:79.25px;"><span class="n">65.4787</span></div><div class="c" style="left:509.50px;width:78.00px;"><span class="n">65.4717</span></div><div class="c" style="left:587.50px;width:137.75px;"><span class="n">2025-07-23 11:56:52</span></div><div class="c" style="left:725.25px;width:138.00px;"><span class="n">2025-07-23 11:59:52</span></div><div class="c" style="left:863.25px;width:49.00px;"><span class="n">180/3</span></div><div class="c" style="left:912.25px;width:60.25px;"><span class="n">-30</span></div><div class="c" style="left:972.50px;width:65.00px;"><span class="lb red" style="padding:0 5.7px">已平仓</span></div><div class="c" style="left:1037.50px;width:96.75px;"><div class="xb grn" style="left:7.5px;width:79.75px;padding-left:19.5px">关闭提示音<svg class="ic" width="14" height="14" viewBox="0 0 14 14" style="left:4.4px;top:2.9px;"><path fill="#fff" fill-rule="evenodd" d="M7 1.7 A5.3 5.3 0 1 0 7 12.3 A5.3 5.3 0 1 0 7 1.7 Z M5.9 5.4 H8.1 Q8.6 5.4 8.6 5.9 V8.1 Q8.6 8.6 8.1 8.6 H5.9 Q5.4 8.6 5.4 8.1 V5.9 Q5.4 5.4 5.9 5.4 Z"/></svg></div></div><div class="c" style="left:1134.25px;width:63.50px;"><div class="xb grn" style="left:7.5px;width:21px"><svg class="ic" width="12" height="12" viewBox="0 0 1792 1792" style="left:4.6px;top:4px;"><path fill="#fff" d="M491 1536l91-91-235-235-91 91v107h128v128h107zm523-928q0-22-22-22-10 0-17 7l-542 542q-7 7-7 17 0 22 22 22 10 0 17-7l542-542q7-7 7-17zm-54-192l416 416-832 832h-416v-416zm683 96q0 53-37 90l-166 166-416-416 166-165q36-38 90-38 53 0 91 38l235 234q37 39 37 91z"/></svg></div><div class="xb red" style="left:32.5px;width:21px"><svg class="ic" width="11" height="11" viewBox="0 0 14 14" style="left:5px;top:4.7px;"><path fill="#fff" fill-rule="evenodd" d="M4.9 2.1 L5.5 .9 Q5.7 .5 6.1 .5 H7.9 Q8.3 .5 8.5 .9 L9.1 2.1 H12.2 Q12.6 2.1 12.6 2.5 V3.2 Q12.6 3.6 12.2 3.6 H1.8 Q1.4 3.6 1.4 3.2 V2.5 Q1.4 2.1 1.8 2.1 Z M6.1 2.1 H7.9 L7.6 1.5 H6.4 Z M2.5 4.3 H11.5 V11.9 Q11.5 13.5 10.1 13.5 H3.9 Q2.5 13.5 2.5 11.9 Z M4.4 5.6 V11.6 Q4.4 11.9 4.65 11.9 H4.75 Q5 11.9 5 11.6 V5.6 Q5 5.3 4.75 5.3 H4.65 Q4.4 5.3 4.4 5.6 Z M6.7 5.6 V11.6 Q6.7 11.9 6.95 11.9 H7.05 Q7.3 11.9 7.3 11.6 V5.6 Q7.3 5.3 7.05 5.3 H6.95 Q6.7 5.3 6.7 5.6 Z M9 5.6 V11.6 Q9 11.9 9.25 11.9 H9.35 Q9.6 11.9 9.6 11.6 V5.6 Q9.6 5.3 9.35 5.3 H9.25 Q9 5.3 9 5.6 Z"/></svg></div></div></div><div class="row" style="top:228.38px;background:#fff;border-top:1px solid #f4f4f4"><div class="c" style="left:0.25px;width:2.25px;border-left:0"></div><div class="c" style="left:2.50px;width:68.75px;">周我姑</div><div class="c" style="left:71.25px;width:43.40px;"></div><div class="c" style="left:114.65px;width:107.85px;">国际黄金</div><div class="c" style="left:222.50px;width:48.15px;"><span class="lb red">买涨</span></div><div class="c" style="left:270.65px;width:77.60px;"><span class="n">300000.00</span></div><div class="c" style="left:348.25px;width:82.00px;"><span class="n">675900.00</span></div><div class="c" style="left:430.25px;width:79.25px;"><span class="n">3350.2502</span></div><div class="c" style="left:509.50px;width:78.00px;"><span class="n">3350.2452</span></div><div class="c" style="left:587.50px;width:137.75px;"><span class="n">2025-07-14 20:52:51</span></div><div class="c" style="left:725.25px;width:138.00px;"><span class="n">2025-07-14 20:56:51</span></div><div class="c" style="left:863.25px;width:49.00px;"><span class="n">240/5</span></div><div class="c" style="left:912.25px;width:60.25px;"><span class="n">-15000</span></div><div class="c" style="left:972.50px;width:65.00px;"><span class="lb red" style="padding:0 5.7px">已平仓</span></div><div class="c" style="left:1037.50px;width:96.75px;"><div class="xb" style="left:18.5px;width:57.75px;padding-left:19.3px;background:#6fd2bf">已关闭<svg class="ic" width="14" height="14" viewBox="0 0 14 14" style="left:4.2px;top:2.9px;"><path fill="#fff" fill-rule="evenodd" d="M7 1.7 A5.3 5.3 0 1 0 7 12.3 A5.3 5.3 0 1 0 7 1.7 Z M5.9 5.4 H8.1 Q8.6 5.4 8.6 5.9 V8.1 Q8.6 8.6 8.1 8.6 H5.9 Q5.4 8.6 5.4 8.1 V5.9 Q5.4 5.4 5.9 5.4 Z"/></svg></div></div><div class="c" style="left:1134.25px;width:63.50px;"><div class="xb grn" style="left:7.5px;width:21px"><svg class="ic" width="12" height="12" viewBox="0 0 1792 1792" style="left:4.6px;top:4px;"><path fill="#fff" d="M491 1536l91-91-235-235-91 91v107h128v128h107zm523-928q0-22-22-22-10 0-17 7l-542 542q-7 7-7 17 0 22 22 22 10 0 17-7l542-542q7-7 7-17zm-54-192l416 416-832 832h-416v-416zm683 96q0 53-37 90l-166 166-416-416 166-165q36-38 90-38 53 0 91 38l235 234q37 39 37 91z"/></svg></div><div class="xb red" style="left:32.5px;width:21px"><svg class="ic" width="11" height="11" viewBox="0 0 14 14" style="left:5px;top:4.7px;"><path fill="#fff" fill-rule="evenodd" d="M4.9 2.1 L5.5 .9 Q5.7 .5 6.1 .5 H7.9 Q8.3 .5 8.5 .9 L9.1 2.1 H12.2 Q12.6 2.1 12.6 2.5 V3.2 Q12.6 3.6 12.2 3.6 H1.8 Q1.4 3.6 1.4 3.2 V2.5 Q1.4 2.1 1.8 2.1 Z M6.1 2.1 H7.9 L7.6 1.5 H6.4 Z M2.5 4.3 H11.5 V11.9 Q11.5 13.5 10.1 13.5 H3.9 Q2.5 13.5 2.5 11.9 Z M4.4 5.6 V11.6 Q4.4 11.9 4.65 11.9 H4.75 Q5 11.9 5 11.6 V5.6 Q5 5.3 4.75 5.3 H4.65 Q4.4 5.3 4.4 5.6 Z M6.7 5.6 V11.6 Q6.7 11.9 6.95 11.9 H7.05 Q7.3 11.9 7.3 11.6 V5.6 Q7.3 5.3 7.05 5.3 H6.95 Q6.7 5.3 6.7 5.6 Z M9 5.6 V11.6 Q9 11.9 9.25 11.9 H9.35 Q9.6 11.9 9.6 11.6 V5.6 Q9.6 5.3 9.35 5.3 H9.25 Q9 5.3 9 5.6 Z"/></svg></div></div></div><div class="row" style="top:265.80px;background:#f9f9f9;border-top:1px solid #f4f4f4"><div class="c" style="left:0.25px;width:2.25px;border-left:0"></div><div class="c" style="left:2.50px;width:68.75px;">都是</div><div class="c" style="left:71.25px;width:43.40px;"></div><div class="c" style="left:114.65px;width:107.85px;">央行数字人民币</div><div class="c" style="left:222.50px;width:48.15px;"><span class="lb grn">买跌</span></div><div class="c" style="left:270.65px;width:77.60px;"><span class="n">300000.00</span></div><div class="c" style="left:348.25px;width:82.00px;"><span class="n">197000.00</span></div><div class="c" style="left:430.25px;width:79.25px;"><span class="n">67.6901</span></div><div class="c" style="left:509.50px;width:78.00px;"><span class="n">67.6821</span></div><div class="c" style="left:587.50px;width:137.75px;"><span class="n">2025-07-14 20:46:32</span></div><div class="c" style="left:725.25px;width:138.00px;"><span class="n">2025-07-14 20:50:32</span></div><div class="c" style="left:863.25px;width:49.00px;"><span class="n">240/5</span></div><div class="c" style="left:912.25px;width:60.25px;"><span class="n">315000</span></div><div class="c" style="left:972.50px;width:65.00px;"><span class="lb red" style="padding:0 5.7px">已平仓</span></div><div class="c" style="left:1037.50px;width:96.75px;"><div class="xb" style="left:18.5px;width:57.75px;padding-left:19.3px;background:#6fd2bf">已关闭<svg class="ic" width="14" height="14" viewBox="0 0 14 14" style="left:4.2px;top:2.9px;"><path fill="#fff" fill-rule="evenodd" d="M7 1.7 A5.3 5.3 0 1 0 7 12.3 A5.3 5.3 0 1 0 7 1.7 Z M5.9 5.4 H8.1 Q8.6 5.4 8.6 5.9 V8.1 Q8.6 8.6 8.1 8.6 H5.9 Q5.4 8.6 5.4 8.1 V5.9 Q5.4 5.4 5.9 5.4 Z"/></svg></div></div><div class="c" style="left:1134.25px;width:63.50px;"><div class="xb grn" style="left:7.5px;width:21px"><svg class="ic" width="12" height="12" viewBox="0 0 1792 1792" style="left:4.6px;top:4px;"><path fill="#fff" d="M491 1536l91-91-235-235-91 91v107h128v128h107zm523-928q0-22-22-22-10 0-17 7l-542 542q-7 7-7 17 0 22 22 22 10 0 17-7l542-542q7-7 7-17zm-54-192l416 416-832 832h-416v-416zm683 96q0 53-37 90l-166 166-416-416 166-165q36-38 90-38 53 0 91 38l235 234q37 39 37 91z"/></svg></div><div class="xb red" style="left:32.5px;width:21px"><svg class="ic" width="11" height="11" viewBox="0 0 14 14" style="left:5px;top:4.7px;"><path fill="#fff" fill-rule="evenodd" d="M4.9 2.1 L5.5 .9 Q5.7 .5 6.1 .5 H7.9 Q8.3 .5 8.5 .9 L9.1 2.1 H12.2 Q12.6 2.1 12.6 2.5 V3.2 Q12.6 3.6 12.2 3.6 H1.8 Q1.4 3.6 1.4 3.2 V2.5 Q1.4 2.1 1.8 2.1 Z M6.1 2.1 H7.9 L7.6 1.5 H6.4 Z M2.5 4.3 H11.5 V11.9 Q11.5 13.5 10.1 13.5 H3.9 Q2.5 13.5 2.5 11.9 Z M4.4 5.6 V11.6 Q4.4 11.9 4.65 11.9 H4.75 Q5 11.9 5 11.6 V5.6 Q5 5.3 4.75 5.3 H4.65 Q4.4 5.3 4.4 5.6 Z M6.7 5.6 V11.6 Q6.7 11.9 6.95 11.9 H7.05 Q7.3 11.9 7.3 11.6 V5.6 Q7.3 5.3 7.05 5.3 H6.95 Q6.7 5.3 6.7 5.6 Z M9 5.6 V11.6 Q9 11.9 9.25 11.9 H9.35 Q9.6 11.9 9.6 11.6 V5.6 Q9.6 5.3 9.35 5.3 H9.25 Q9 5.3 9 5.6 Z"/></svg></div></div></div><div class="row" style="top:303.22px;background:#fff;border-top:1px solid #f4f4f4"><div class="c" style="left:0.25px;width:2.25px;border-left:0"></div><div class="c" style="left:2.50px;width:68.75px;">周我姑</div><div class="c" style="left:71.25px;width:43.40px;"></div><div class="c" style="left:114.65px;width:107.85px;">央行数字人民币</div><div class="c" style="left:222.50px;width:48.15px;"><span class="lb red">买涨</span></div><div class="c" style="left:270.65px;width:77.60px;"><span class="n">300000.00</span></div><div class="c" style="left:348.25px;width:82.00px;"><span class="n">399900.00</span></div><div class="c" style="left:430.25px;width:79.25px;"><span class="n">67.6607</span></div><div class="c" style="left:509.50px;width:78.00px;"><span class="n">67.6537</span></div><div class="c" style="left:587.50px;width:137.75px;"><span class="n">2025-07-14 20:45:21</span></div><div class="c" style="left:725.25px;width:138.00px;"><span class="n">2025-07-14 20:49:21</span></div><div class="c" style="left:863.25px;width:49.00px;"><span class="n">240/5</span></div><div class="c" style="left:912.25px;width:60.25px;"><span class="n">-15000</span></div><div class="c" style="left:972.50px;width:65.00px;"><span class="lb red" style="padding:0 5.7px">已平仓</span></div><div class="c" style="left:1037.50px;width:96.75px;"><div class="xb" style="left:18.5px;width:57.75px;padding-left:19.3px;background:#6fd2bf">已关闭<svg class="ic" width="14" height="14" viewBox="0 0 14 14" style="left:4.2px;top:2.9px;"><path fill="#fff" fill-rule="evenodd" d="M7 1.7 A5.3 5.3 0 1 0 7 12.3 A5.3 5.3 0 1 0 7 1.7 Z M5.9 5.4 H8.1 Q8.6 5.4 8.6 5.9 V8.1 Q8.6 8.6 8.1 8.6 H5.9 Q5.4 8.6 5.4 8.1 V5.9 Q5.4 5.4 5.9 5.4 Z"/></svg></div></div><div class="c" style="left:1134.25px;width:63.50px;"><div class="xb grn" style="left:7.5px;width:21px"><svg class="ic" width="12" height="12" viewBox="0 0 1792 1792" style="left:4.6px;top:4px;"><path fill="#fff" d="M491 1536l91-91-235-235-91 91v107h128v128h107zm523-928q0-22-22-22-10 0-17 7l-542 542q-7 7-7 17 0 22 22 22 10 0 17-7l542-542q7-7 7-17zm-54-192l416 416-832 832h-416v-416zm683 96q0 53-37 90l-166 166-416-416 166-165q36-38 90-38 53 0 91 38l235 234q37 39 37 91z"/></svg></div><div class="xb red" style="left:32.5px;width:21px"><svg class="ic" width="11" height="11" viewBox="0 0 14 14" style="left:5px;top:4.7px;"><path fill="#fff" fill-rule="evenodd" d="M4.9 2.1 L5.5 .9 Q5.7 .5 6.1 .5 H7.9 Q8.3 .5 8.5 .9 L9.1 2.1 H12.2 Q12.6 2.1 12.6 2.5 V3.2 Q12.6 3.6 12.2 3.6 H1.8 Q1.4 3.6 1.4 3.2 V2.5 Q1.4 2.1 1.8 2.1 Z M6.1 2.1 H7.9 L7.6 1.5 H6.4 Z M2.5 4.3 H11.5 V11.9 Q11.5 13.5 10.1 13.5 H3.9 Q2.5 13.5 2.5 11.9 Z M4.4 5.6 V11.6 Q4.4 11.9 4.65 11.9 H4.75 Q5 11.9 5 11.6 V5.6 Q5 5.3 4.75 5.3 H4.65 Q4.4 5.3 4.4 5.6 Z M6.7 5.6 V11.6 Q6.7 11.9 6.95 11.9 H7.05 Q7.3 11.9 7.3 11.6 V5.6 Q7.3 5.3 7.05 5.3 H6.95 Q6.7 5.3 6.7 5.6 Z M9 5.6 V11.6 Q9 11.9 9.25 11.9 H9.35 Q9.6 11.9 9.6 11.6 V5.6 Q9.6 5.3 9.35 5.3 H9.25 Q9 5.3 9 5.6 Z"/></svg></div></div></div><div class="row" style="top:340.65px;background:#f9f9f9;border-top:1px solid #f4f4f4"><div class="c" style="left:0.25px;width:2.25px;border-left:0"></div><div class="c" style="left:2.50px;width:68.75px;">都是</div><div class="c" style="left:71.25px;width:43.40px;"></div><div class="c" style="left:114.65px;width:107.85px;">央行数字人民币</div><div class="c" style="left:222.50px;width:48.15px;"><span class="lb red">买涨</span></div><div class="c" style="left:270.65px;width:77.60px;"><span class="n">3000.00</span></div><div class="c" style="left:348.25px;width:82.00px;"><span class="n">497000.00</span></div><div class="c" style="left:430.25px;width:79.25px;"><span class="n">67.6586</span></div><div class="c" style="left:509.50px;width:78.00px;"><span class="n">67.6576</span></div><div class="c" style="left:587.50px;width:137.75px;"><span class="n">2025-07-14 20:45:17</span></div><div class="c" style="left:725.25px;width:138.00px;"><span class="n">2025-07-14 20:48:17</span></div><div class="c" style="left:863.25px;width:49.00px;"><span class="n">180/3</span></div><div class="c" style="left:912.25px;width:60.25px;"><span class="n">-90</span></div><div class="c" style="left:972.50px;width:65.00px;"><span class="lb red" style="padding:0 5.7px">已平仓</span></div><div class="c" style="left:1037.50px;width:96.75px;"><div class="xb" style="left:18.5px;width:57.75px;padding-left:19.3px;background:#6fd2bf">已关闭<svg class="ic" width="14" height="14" viewBox="0 0 14 14" style="left:4.2px;top:2.9px;"><path fill="#fff" fill-rule="evenodd" d="M7 1.7 A5.3 5.3 0 1 0 7 12.3 A5.3 5.3 0 1 0 7 1.7 Z M5.9 5.4 H8.1 Q8.6 5.4 8.6 5.9 V8.1 Q8.6 8.6 8.1 8.6 H5.9 Q5.4 8.6 5.4 8.1 V5.9 Q5.4 5.4 5.9 5.4 Z"/></svg></div></div><div class="c" style="left:1134.25px;width:63.50px;"><div class="xb grn" style="left:7.5px;width:21px"><svg class="ic" width="12" height="12" viewBox="0 0 1792 1792" style="left:4.6px;top:4px;"><path fill="#fff" d="M491 1536l91-91-235-235-91 91v107h128v128h107zm523-928q0-22-22-22-10 0-17 7l-542 542q-7 7-7 17 0 22 22 22 10 0 17-7l542-542q7-7 7-17zm-54-192l416 416-832 832h-416v-416zm683 96q0 53-37 90l-166 166-416-416 166-165q36-38 90-38 53 0 91 38l235 234q37 39 37 91z"/></svg></div><div class="xb red" style="left:32.5px;width:21px"><svg class="ic" width="11" height="11" viewBox="0 0 14 14" style="left:5px;top:4.7px;"><path fill="#fff" fill-rule="evenodd" d="M4.9 2.1 L5.5 .9 Q5.7 .5 6.1 .5 H7.9 Q8.3 .5 8.5 .9 L9.1 2.1 H12.2 Q12.6 2.1 12.6 2.5 V3.2 Q12.6 3.6 12.2 3.6 H1.8 Q1.4 3.6 1.4 3.2 V2.5 Q1.4 2.1 1.8 2.1 Z M6.1 2.1 H7.9 L7.6 1.5 H6.4 Z M2.5 4.3 H11.5 V11.9 Q11.5 13.5 10.1 13.5 H3.9 Q2.5 13.5 2.5 11.9 Z M4.4 5.6 V11.6 Q4.4 11.9 4.65 11.9 H4.75 Q5 11.9 5 11.6 V5.6 Q5 5.3 4.75 5.3 H4.65 Q4.4 5.3 4.4 5.6 Z M6.7 5.6 V11.6 Q6.7 11.9 6.95 11.9 H7.05 Q7.3 11.9 7.3 11.6 V5.6 Q7.3 5.3 7.05 5.3 H6.95 Q6.7 5.3 6.7 5.6 Z M9 5.6 V11.6 Q9 11.9 9.25 11.9 H9.35 Q9.6 11.9 9.6 11.6 V5.6 Q9.6 5.3 9.35 5.3 H9.25 Q9 5.3 9 5.6 Z"/></svg></div></div></div><div class="row" style="top:378.07px;background:#fff;border-top:1px solid #f4f4f4"><div class="c" style="left:0.25px;width:2.25px;border-left:0"></div><div class="c" style="left:2.50px;width:68.75px;">周我姑</div><div class="c" style="left:71.25px;width:43.40px;"></div><div class="c" style="left:114.65px;width:107.85px;">央行数字人民币</div><div class="c" style="left:222.50px;width:48.15px;"><span class="lb red">买涨</span></div><div class="c" style="left:270.65px;width:77.60px;"><span class="n">300000.00</span></div><div class="c" style="left:348.25px;width:82.00px;"><span class="n">699900.00</span></div><div class="c" style="left:430.25px;width:79.25px;"><span class="n">67.6582</span></div><div class="c" style="left:509.50px;width:78.00px;"><span class="n">66.9582</span></div><div class="c" style="left:587.50px;width:137.75px;"><span class="n">2025-07-14 20:45:09</span></div><div class="c" style="left:725.25px;width:138.00px;"><span class="n">2025-07-14 20:48:09</span></div><div class="c" style="left:863.25px;width:49.00px;"><span class="n">180/3</span></div><div class="c" style="left:912.25px;width:60.25px;"><span class="n">-9000</span></div><div class="c" style="left:972.50px;width:65.00px;"><span class="lb red" style="padding:0 5.7px">已平仓</span></div><div class="c" style="left:1037.50px;width:96.75px;"><div class="xb" style="left:18.5px;width:57.75px;padding-left:19.3px;background:#6fd2bf">已关闭<svg class="ic" width="14" height="14" viewBox="0 0 14 14" style="left:4.2px;top:2.9px;"><path fill="#fff" fill-rule="evenodd" d="M7 1.7 A5.3 5.3 0 1 0 7 12.3 A5.3 5.3 0 1 0 7 1.7 Z M5.9 5.4 H8.1 Q8.6 5.4 8.6 5.9 V8.1 Q8.6 8.6 8.1 8.6 H5.9 Q5.4 8.6 5.4 8.1 V5.9 Q5.4 5.4 5.9 5.4 Z"/></svg></div></div><div class="c" style="left:1134.25px;width:63.50px;"><div class="xb grn" style="left:7.5px;width:21px"><svg class="ic" width="12" height="12" viewBox="0 0 1792 1792" style="left:4.6px;top:4px;"><path fill="#fff" d="M491 1536l91-91-235-235-91 91v107h128v128h107zm523-928q0-22-22-22-10 0-17 7l-542 542q-7 7-7 17 0 22 22 22 10 0 17-7l542-542q7-7 7-17zm-54-192l416 416-832 832h-416v-416zm683 96q0 53-37 90l-166 166-416-416 166-165q36-38 90-38 53 0 91 38l235 234q37 39 37 91z"/></svg></div><div class="xb red" style="left:32.5px;width:21px"><svg class="ic" width="11" height="11" viewBox="0 0 14 14" style="left:5px;top:4.7px;"><path fill="#fff" fill-rule="evenodd" d="M4.9 2.1 L5.5 .9 Q5.7 .5 6.1 .5 H7.9 Q8.3 .5 8.5 .9 L9.1 2.1 H12.2 Q12.6 2.1 12.6 2.5 V3.2 Q12.6 3.6 12.2 3.6 H1.8 Q1.4 3.6 1.4 3.2 V2.5 Q1.4 2.1 1.8 2.1 Z M6.1 2.1 H7.9 L7.6 1.5 H6.4 Z M2.5 4.3 H11.5 V11.9 Q11.5 13.5 10.1 13.5 H3.9 Q2.5 13.5 2.5 11.9 Z M4.4 5.6 V11.6 Q4.4 11.9 4.65 11.9 H4.75 Q5 11.9 5 11.6 V5.6 Q5 5.3 4.75 5.3 H4.65 Q4.4 5.3 4.4 5.6 Z M6.7 5.6 V11.6 Q6.7 11.9 6.95 11.9 H7.05 Q7.3 11.9 7.3 11.6 V5.6 Q7.3 5.3 7.05 5.3 H6.95 Q6.7 5.3 6.7 5.6 Z M9 5.6 V11.6 Q9 11.9 9.25 11.9 H9.35 Q9.6 11.9 9.6 11.6 V5.6 Q9.6 5.3 9.35 5.3 H9.25 Q9 5.3 9 5.6 Z"/></svg></div></div></div><div class="abs" style="left:0;top:415.5px;width:1198px;height:16px;background:#fafafa"></div><div class="abs" style="left:183.3px;top:419.8px;width:996.5px;height:8.8px;border-radius:4.4px;background:#8b8b8b"></div><svg class="ic" style="left:4.7px;top:418.8px" width="6" height="10" viewBox="0 0 6 10"><path d="M5.6 0 V10 L.4 5 Z" fill="#7a7a7a"/></svg><svg class="ic" style="left:1186.6px;top:418.8px" width="6" height="10" viewBox="0 0 6 10"><path d="M.4 0 V10 L5.6 5 Z" fill="#7a7a7a"/></svg></div><div class="abs" style="left:1240px;top:325px;width:47.5px;height:83.3px;border:1px solid #6b6b6b;background:#fff;font-size:13px;line-height:27px;color:#222"><div style="background:#1a66d6;color:#fff;padding-left:4px;height:27px">默认</div><div style="padding-left:4px;height:27px">赢</div><div style="padding-left:4px;height:27px">亏</div></div><div class="t " style="left:259px;top:704.3px;color:#333;font-size:13px">显示第 1 到第 10 条记录，总共 71 条记录 每页显示</div><div class="abs" style="left:559px;top:700.2px;width:50.6px;height:30.4px;background:#f4f4f4;border:1px solid #ddd;border-radius:3px"></div><div class="t " style="left:573px;top:704.3px;color:#444;font-size:12px">10</div><svg class="ic" style="left:589px;top:714px" width="8" height="4" viewBox="0 0 8 4"><path d="M0 4 L4 0 L8 4 Z" fill="#333"/></svg><div class="t " style="left:614.5px;top:704.3px;color:#333;font-size:13px">条记录</div><div class="pg" style="left:1099px;width:64.0px;border-left:1px solid #ddd;border-radius:3px 0 0 3px;">上一页</div><div class="pg" style="left:1163px;width:33.0px;background:#2c3e50;border-color:#2c3e50;color:#fff;">1</div><div class="pg" style="left:1196px;width:32.0px;">2</div><div class="pg" style="left:1228px;width:32.0px;">3</div><div class="pg" style="left:1260px;width:32.5px;">4</div><div class="pg" style="left:1292.5px;width:32.0px;">5</div><div class="pg" style="left:1324.5px;width:36.5px;background:#fff;color:#999;">...</div><div class="pg" style="left:1361px;width:32.0px;">8</div><div class="pg" style="left:1393px;width:64.0px;border-radius:0 3px 3px 0;">下一页</div><svg class="ic wm" style="left:9.5px;top:-4px" width="130" height="140" viewBox="0 0 864 931"><defs><linearGradient id="wg0" x1="0" y1="0" x2="1" y2="0"><stop offset="0" stop-color="#1fc4f4"/><stop offset="1" stop-color="#1a72d6"/></linearGradient></defs><g fill="url(#wg0)" fill-opacity=".115"><path d="M108 520 Q100 480 135 450 Q165 420 205 432 L418 497 L352 578 L222 545 L372 862 L248 836 Z"/><path d="M440 85 L486 165 L377 300 L432 352 Q500 262 590 256 Q672 262 700 360 Q712 450 640 532 L546 506 Q600 455 606 405 Q600 362 560 362 Q520 372 470 440 L432 475 Q420 480 405 470 L245 335 Q232 320 245 305 Z"/><path d="M482 520 L612 560 L552 640 L416 600 Z"/><path d="M430 640 L478 722 L406 812 L364 722 Z"/></g></svg><svg class="ic wm" style="left:546.5px;top:-4px" width="130" height="140" viewBox="0 0 864 931"><defs><linearGradient id="wg1" x1="0" y1="0" x2="1" y2="0"><stop offset="0" stop-color="#1fc4f4"/><stop offset="1" stop-color="#1a72d6"/></linearGradient></defs><g fill="url(#wg1)" fill-opacity=".115"><path d="M108 520 Q100 480 135 450 Q165 420 205 432 L418 497 L352 578 L222 545 L372 862 L248 836 Z"/><path d="M440 85 L486 165 L377 300 L432 352 Q500 262 590 256 Q672 262 700 360 Q712 450 640 532 L546 506 Q600 455 606 405 Q600 362 560 362 Q520 372 470 440 L432 475 Q420 480 405 470 L245 335 Q232 320 245 305 Z"/><path d="M482 520 L612 560 L552 640 L416 600 Z"/><path d="M430 640 L478 722 L406 812 L364 722 Z"/></g></svg><svg class="ic wm" style="left:1083.5px;top:-4px" width="130" height="140" viewBox="0 0 864 931"><defs><linearGradient id="wg2" x1="0" y1="0" x2="1" y2="0"><stop offset="0" stop-color="#1fc4f4"/><stop offset="1" stop-color="#1a72d6"/></linearGradient></defs><g fill="url(#wg2)" fill-opacity=".115"><path d="M108 520 Q100 480 135 450 Q165 420 205 432 L418 497 L352 578 L222 545 L372 862 L248 836 Z"/><path d="M440 85 L486 165 L377 300 L432 352 Q500 262 590 256 Q672 262 700 360 Q712 450 640 532 L546 506 Q600 455 606 405 Q600 362 560 362 Q520 372 470 440 L432 475 Q420 480 405 470 L245 335 Q232 320 245 305 Z"/><path d="M482 520 L612 560 L552 640 L416 600 Z"/><path d="M430 640 L478 722 L406 812 L364 722 Z"/></g></svg><svg class="ic wm" style="left:9.5px;top:540px" width="130" height="140" viewBox="0 0 864 931"><defs><linearGradient id="wg3" x1="0" y1="0" x2="1" y2="0"><stop offset="0" stop-color="#1fc4f4"/><stop offset="1" stop-color="#1a72d6"/></linearGradient></defs><g fill="url(#wg3)" fill-opacity=".115"><path d="M108 520 Q100 480 135 450 Q165 420 205 432 L418 497 L352 578 L222 545 L372 862 L248 836 Z"/><path d="M440 85 L486 165 L377 300 L432 352 Q500 262 590 256 Q672 262 700 360 Q712 450 640 532 L546 506 Q600 455 606 405 Q600 362 560 362 Q520 372 470 440 L432 475 Q420 480 405 470 L245 335 Q232 320 245 305 Z"/><path d="M482 520 L612 560 L552 640 L416 600 Z"/><path d="M430 640 L478 722 L406 812 L364 722 Z"/></g></svg><svg class="ic wm" style="left:547px;top:540px" width="130" height="140" viewBox="0 0 864 931"><defs><linearGradient id="wg4" x1="0" y1="0" x2="1" y2="0"><stop offset="0" stop-color="#1fc4f4"/><stop offset="1" stop-color="#1a72d6"/></linearGradient></defs><g fill="url(#wg4)" fill-opacity=".115"><path d="M108 520 Q100 480 135 450 Q165 420 205 432 L418 497 L352 578 L222 545 L372 862 L248 836 Z"/><path d="M440 85 L486 165 L377 300 L432 352 Q500 262 590 256 Q672 262 700 360 Q712 450 640 532 L546 506 Q600 455 606 405 Q600 362 560 362 Q520 372 470 440 L432 475 Q420 480 405 470 L245 335 Q232 320 245 305 Z"/><path d="M482 520 L612 560 L552 640 L416 600 Z"/><path d="M430 640 L478 722 L406 812 L364 722 Z"/></g></svg><svg class="ic wm" style="left:1085px;top:540px" width="130" height="140" viewBox="0 0 864 931"><defs><linearGradient id="wg5" x1="0" y1="0" x2="1" y2="0"><stop offset="0" stop-color="#1fc4f4"/><stop offset="1" stop-color="#1a72d6"/></linearGradient></defs><g fill="url(#wg5)" fill-opacity=".115"><path d="M108 520 Q100 480 135 450 Q165 420 205 432 L418 497 L352 578 L222 545 L372 862 L248 836 Z"/><path d="M440 85 L486 165 L377 300 L432 352 Q500 262 590 256 Q672 262 700 360 Q712 450 640 532 L546 506 Q600 455 606 405 Q600 362 560 362 Q520 372 470 440 L432 475 Q420 480 405 470 L245 335 Q232 320 245 305 Z"/><path d="M482 520 L612 560 L552 640 L416 600 Z"/><path d="M430 640 L478 722 L406 812 L364 722 Z"/></g></svg></body></html>
